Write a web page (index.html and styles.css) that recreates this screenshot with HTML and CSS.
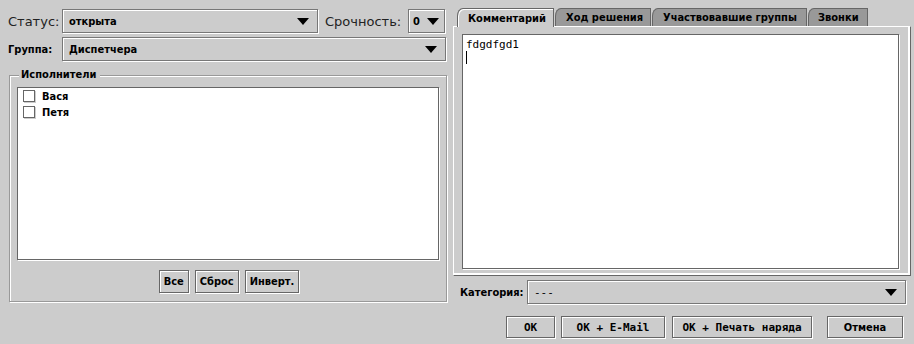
FILE: index.html
```html
<!doctype html>
<html>
<head>
<meta charset="UTF-8">
<title>Заявка</title>
	<link rel="stylesheet" href="styles.css">
</head>
<body>
	<div class="window">
		<div class="left">
			<div class="row row-status">
				<span class="label-big">Статус:</span>
				<div class="combo combo-status"><span>открыта</span><i class="arrow"></i></div>
				<span class="label-big label-urg">Срочность:</span>
				<div class="combo combo-urg"><span>0</span><i class="arrow"></i></div>
			</div>
			<div class="row row-group">
				<span class="label">Группа:</span>
				<div class="combo combo-group"><span>Диспетчера</span><i class="arrow"></i></div>
			</div>
			<div class="group-box">
				<div class="legend">Исполнители</div>
				<div class="list">
					<div class="item"><i class="check"></i>Вася</div>
					<div class="item"><i class="check"></i>Петя</div>
				</div>
				<div class="list-buttons">
					<div class="btn btn-small">Все</div>
					<div class="btn btn-small">Сброс</div>
					<div class="btn btn-small">Инверт.</div>
				</div>
			</div>
		</div>

		<div class="right">
			<div class="tabs">
				<div class="tab tab-active">Комментарий</div>
				<div class="tab tab-2">Ход решения</div>
				<div class="tab tab-3">Участвовавшие группы</div>
				<div class="tab tab-4">Звонки</div>
			</div>
			<div class="tab-panel">
				<div class="text-area">fdgdfgd1<br><span class="caret"></span></div>
			</div>
			<div class="row row-cat">
				<span class="label">Категория:</span>
				<div class="combo combo-cat"><span class="mono">---</span><i class="arrow"></i></div>
			</div>
			<div class="actions">
				<div class="btn btn-ok">OK</div>
				<div class="btn btn-mail">OK + E-Mail</div>
				<div class="btn btn-print">OK + Печать наряда</div>
				<div class="btn btn-cancel">Отмена</div>
			</div>
		</div>
	</div>
</body>
</html>
```

FILE: styles.css
```css
html, body {
	margin: 0;
	padding: 0;
	background-color: #CCCCCC;
}

.window {
	width: 914px;
	height: 344px;
	display: flex;
	font-family: "DejaVu Sans Condensed", "DejaVu Sans", sans-serif;
	font-size: 11px;
	font-weight: bold;
	color: #000000;
}

.left {
	width: 447px;
	padding-left: 8px;
	padding-top: 9px;
	box-sizing: border-box;
}

.right {
	width: 458px;
	padding-left: 6px;
	padding-top: 8px;
}

.row {
	display: flex;
	align-items: center;
}

.label-big {
	font-family: "DejaVu Sans", sans-serif;
	font-weight: normal;
	font-size: 13px;
	color: #222222;
}

.label {
	font-size: 11px;
}

.combo {
	height: 24px;
	border: 1px solid #777777;
	box-shadow: 1px 1px 0 #FFFFFF, inset 1px 1px 0 #FFFFFF;
	display: flex;
	align-items: center;
	justify-content: space-between;
	padding: 0 8px 0 6px;
	box-sizing: border-box;
}

.arrow {
	width: 0;
	height: 0;
	border-left: 6px solid transparent;
	border-right: 6px solid transparent;
	border-top: 7px solid #000000;
}

.row-status .label-big:first-child {
	width: 54px;
}

.combo-status {
	width: 256px;
}

.label-urg {
	margin-left: 7px;
	width: 83px;
}

.combo-urg {
	width: 37px;
	padding-left: 4px;
	padding-right: 5px;
}

.row-group {
	margin-top: 4px;
}

.row-group .label {
	width: 54px;
}

.combo-group {
	width: 384px;
}

.group-box {
	margin-top: 14px;
	margin-left: 1px;
	width: 438px;
	height: 227px;
	border: 1px solid #999999;
	box-shadow: 1px 1px 0 #FFFFFF, inset 1px 1px 0 #FFFFFF;
	box-sizing: border-box;
	position: relative;
	padding: 11px 7px 0 7px;
}

.legend {
	position: absolute;
	top: -8px;
	left: 9px;
	padding: 0 4px 0 2px;
	background-color: #CCCCCC;
	font-size: 11px;
}

.list {
	width: 422px;
	height: 173px;
	background-color: #FFFFFF;
	border: 1px solid #666666;
	box-shadow: 1px 1px 0 #FFFFFF;
	box-sizing: border-box;
	padding-top: 0;
	padding-left: 5px;
}

.item {
	display: flex;
	align-items: center;
	height: 16px;
}

.check {
	width: 10px;
	height: 10px;
	border: 1px solid #666666;
	box-shadow: 1px 1px 0 #CCCCCC;
	margin-right: 7px;
	background-color: #FFFFFF;
}

.list-buttons {
	display: flex;
	justify-content: center;
	gap: 6px;
	margin-top: 10px;
	margin-left: 2px;
}

.btn {
	height: 23px;
	border: 1px solid #666666;
	box-shadow: 1px 1px 0 #FFFFFF, inset 1px 1px 0 #FFFFFF;
	box-sizing: border-box;
	display: flex;
	align-items: center;
	justify-content: center;
	font-size: 11px;
}

.btn-small {
	padding: 0 4px;
}

.tabs {
	display: flex;
	height: 18px;
	align-items: flex-end;
	padding-left: 4px;
}

.tab {
	height: 18px;
	box-sizing: border-box;
	border: 1px solid #666666;
	border-bottom: none;
	background-color: #999999;
	border-top-left-radius: 6px 8px;
	display: flex;
	align-items: center;
	padding: 0 0 0 9px;
	font-size: 11px;
	margin-right: 1px;
	white-space: nowrap;
}

.tab-active {
	background-color: #CCCCCC;
	box-shadow: inset 1px 1px 0 #FFFFFF;
	height: 19px;
	margin-bottom: -1px;
	position: relative;
	z-index: 1;
	width: 97px;
	padding-left: 10px;
}

.tab-2 {
	width: 96px;
	padding-left: 10px;
}

.tab-3 {
	width: 155px;
	padding-left: 10px;
}

.tab-4 {
	width: 60px;
	padding-left: 9px;
}

.tab-panel {
	width: 458px;
	height: 250px;
	box-sizing: border-box;
	border-top: 1px solid #FFFFFF;
	border-left: 1px solid #FFFFFF;
	border-right: 1px solid #666666;
	border-bottom: 1px solid #666666;
	box-shadow: inset -2px -2px 0 #FFFFFF;
	padding: 7px 0 0 8px;
}

.text-area {
	width: 437px;
	height: 235px;
	background-color: #FFFFFF;
	border: 1px solid #666666;
	box-shadow: 1px 1px 0 #FFFFFF;
	box-sizing: border-box;
	font-family: "DejaVu Sans Mono", monospace;
	font-weight: normal;
	font-size: 11px;
	padding: 3px 0 0 3px;
	line-height: 13px;
}

.caret {
	display: inline-block;
	width: 1px;
	height: 13px;
	background-color: #000000;
}

.row-cat {
	margin-top: 4px;
	padding-left: 7px;
}

.row-cat .label {
	width: 67px;
}

.combo-cat {
	width: 379px;
}

.mono {
	font-family: "DejaVu Sans Mono", monospace;
	font-weight: normal;
}

.actions {
	display: flex;
	margin-top: 12px;
	padding-left: 53px;
	gap: 6px;
}

.actions .btn {
	height: 22px;
	font-family: "DejaVu Sans Mono", "DejaVu Sans Condensed", monospace;
	font-size: 11px;
}

.btn-ok {
	width: 49px;
}

.btn-mail {
	width: 104px;
}

.btn-print {
	width: 140px;
	margin-left: 1px;
}

.actions .btn-cancel {
	width: 76px;
	margin-left: 9px;
	font-family: "DejaVu Sans Condensed", sans-serif;
}
```
